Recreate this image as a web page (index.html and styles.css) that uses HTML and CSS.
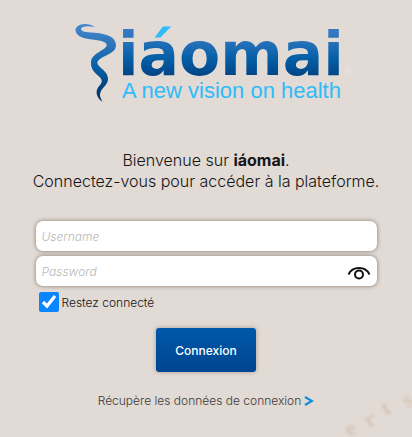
FILE: index.html
```html
<!DOCTYPE html>
<html lang="fr">
<head>
<meta charset="utf-8">
<meta name="viewport" content="width=device-width, initial-scale=1">
<title>iáomai</title>
<link rel="stylesheet" href="styles.css">
</head>
<body>
<main class="login">
  <svg class="logo" viewBox="0 0 282 88" role="img" aria-label="iáomai – A new vision on health">
    <defs>
      <linearGradient id="blue" gradientUnits="userSpaceOnUse" x1="0" y1="4" x2="0" y2="56">
        <stop offset="0" stop-color="#387fc8"/>
        <stop offset=".3" stop-color="#2d74bb"/>
        <stop offset=".65" stop-color="#0560a8"/>
        <stop offset="1" stop-color="#004485"/>
      </linearGradient>
      <linearGradient id="accent" gradientUnits="userSpaceOnUse" x1="0" y1="4" x2="0" y2="56">
        <stop offset="0" stop-color="#2ebcfa"/>
        <stop offset=".26" stop-color="#2ebcfa"/>
        <stop offset=".26" stop-color="#2d74bb"/>
        <stop offset=".65" stop-color="#0560a8"/>
        <stop offset="1" stop-color="#004485"/>
      </linearGradient>
      <linearGradient id="snake" x1="0" y1="0" x2="0" y2="1">
        <stop offset="0" stop-color="#4488cc"/>
        <stop offset=".3" stop-color="#2b72b8"/>
        <stop offset=".55" stop-color="#0560a8"/>
        <stop offset="1" stop-color="#002c5e"/>
      </linearGradient>
    </defs>
    <path fill="url(#snake)" d="M20 7C14 3 4 3 1 8C-1 13 4 17 11 18.500C19 20 26 20 30 22.500C33 25 32 27 27 30C21 34 15.500 37 16 43C16 49 19 52 23 55.500C27 59 28 61 25 65C22 68 21 71 22 75C23 78 25 80 27.500 82C25 77 24 75 26 71C28 67 33 64 33 59C33 53 28 50 25 47C22 44 21 42 25 39C30 35 41 33 41 25.500C41 18 34 15 26 13.500C18 12 7 13 6 9.500C6 6 13 5.500 20 7Z"/>
    <text class="logo-name" x="43" y="55" fill="url(#blue)">i<tspan fill="url(#accent)">á</tspan>omai</text>
    <text class="logo-tag" x="47" y="78">A new vision on health</text>
    <text class="logo-mark" x="269" y="55">®</text>
  </svg>

  <p class="welcome">Bienvenue sur <strong>iáomai</strong>.<br>Connectez-vous pour accéder à la plateforme.</p>

  <form class="form">
    <input class="field" type="text" placeholder="Username" aria-label="Username">
    <div class="password">
      <input class="field" type="password" placeholder="Password" aria-label="Password">
      <button class="reveal" type="button" aria-label="Afficher">
        <svg viewBox="0 0 24 14" fill="none" stroke="#111" stroke-width="2">
          <path d="M1.500 8.500C3.500 4 7.500 2 12 2S20.500 4 22.500 8.500"/>
          <circle cx="12" cy="8.500" r="4"/>
        </svg>
      </button>
    </div>
    <label class="remember"><input type="checkbox" checked>Restez connecté</label>
    <button class="submit" type="submit">Connexion</button>
  </form>

  <a class="recover" href="#">Récupère les données de connexion
    <svg viewBox="0 0 10 10" fill="none" stroke="#0d8ede" stroke-width="2.200"><path d="M1 1L8 5L1 9"/></svg>
  </a>
</main>
<svg class="watermark" viewBox="0 0 80 60" aria-hidden="true">
  <text x="17 37 54 75" y="60 51 39 31" rotate="-30">erts</text>
</svg>
</body>
</html>
```
FILE: styles.css
```css
* { box-sizing: border-box; }

body {
  margin: 0;
  min-height: 100vh;
  position: relative;
  overflow-x: hidden;
  background: #e1dad5;
  color: #151515;
  font-family: Inter, "Liberation Sans", sans-serif;
}

.login {
  display: flex;
  flex-direction: column;
  align-items: center;
  padding: 20px 24px;
}

.logo {
  width: 282px;
  max-width: 100%;
  margin-left: 20px;
}

.logo-name { font: bold 60px "DejaVu Sans", sans-serif; }
.logo-tag { font: 22px "Liberation Sans", sans-serif; fill: #2ebcfa; }
.logo-mark { font: 11px "Liberation Sans", sans-serif; fill: #ebe6e2; }

.welcome {
  margin: 42px 0 29px;
  font-size: 16px;
  font-weight: 300;
  line-height: 21px;
  text-align: center;
}

.welcome strong { font-weight: 700; }

.form {
  display: flex;
  flex-direction: column;
  gap: 5px;
  width: 100%;
  max-width: 341px;
}

.field {
  display: block;
  width: 100%;
  height: 30px;
  padding: 0 6px;
  border: 0;
  border-radius: 7px;
  background: #fff;
  box-shadow: 0 0 4px #807468;
  font: 300 12px Inter, "Liberation Sans", sans-serif;
}

.field::placeholder {
  color: #b8b8b8;
  font-style: italic;
  opacity: 1;
}

.password { position: relative; }

.reveal {
  position: absolute;
  right: 6px;
  top: 10px;
  padding: 0;
  border: 0;
  background: none;
}

.reveal svg { display: block; width: 24px; height: 14px; }

.remember {
  display: flex;
  align-items: center;
  gap: 3px;
  padding: 1px 0 0 3px;
  font-size: 12px;
  font-weight: 300;
}

.remember input {
  width: 20px;
  height: 20px;
  margin: 0;
  accent-color: #0a84ff;
}

.submit {
  align-self: center;
  width: 100px;
  height: 44px;
  margin-top: 11px;
  padding: 0;
  border: 0;
  border-radius: 3px;
  background: linear-gradient(#0059a9, #004590);
  box-shadow: 0 0 4px #a89c92;
  color: #fff;
  font: 500 12px Inter, "Liberation Sans", sans-serif;
}

.recover {
  display: flex;
  align-items: center;
  gap: 3px;
  margin-top: 21px;
  color: #3c3a39;
  font-size: 12px;
  font-weight: 300;
  line-height: 16px;
  text-decoration: none;
}

.recover svg { width: 10px; height: 10px; }

.watermark {
  position: absolute;
  right: 0;
  bottom: 0;
  width: 80px;
  height: 60px;
  filter: blur(1px);
  pointer-events: none;
}

.watermark text {
  font: bold 22px "Liberation Serif", serif;
  fill: #d8c6b6;
}
```
